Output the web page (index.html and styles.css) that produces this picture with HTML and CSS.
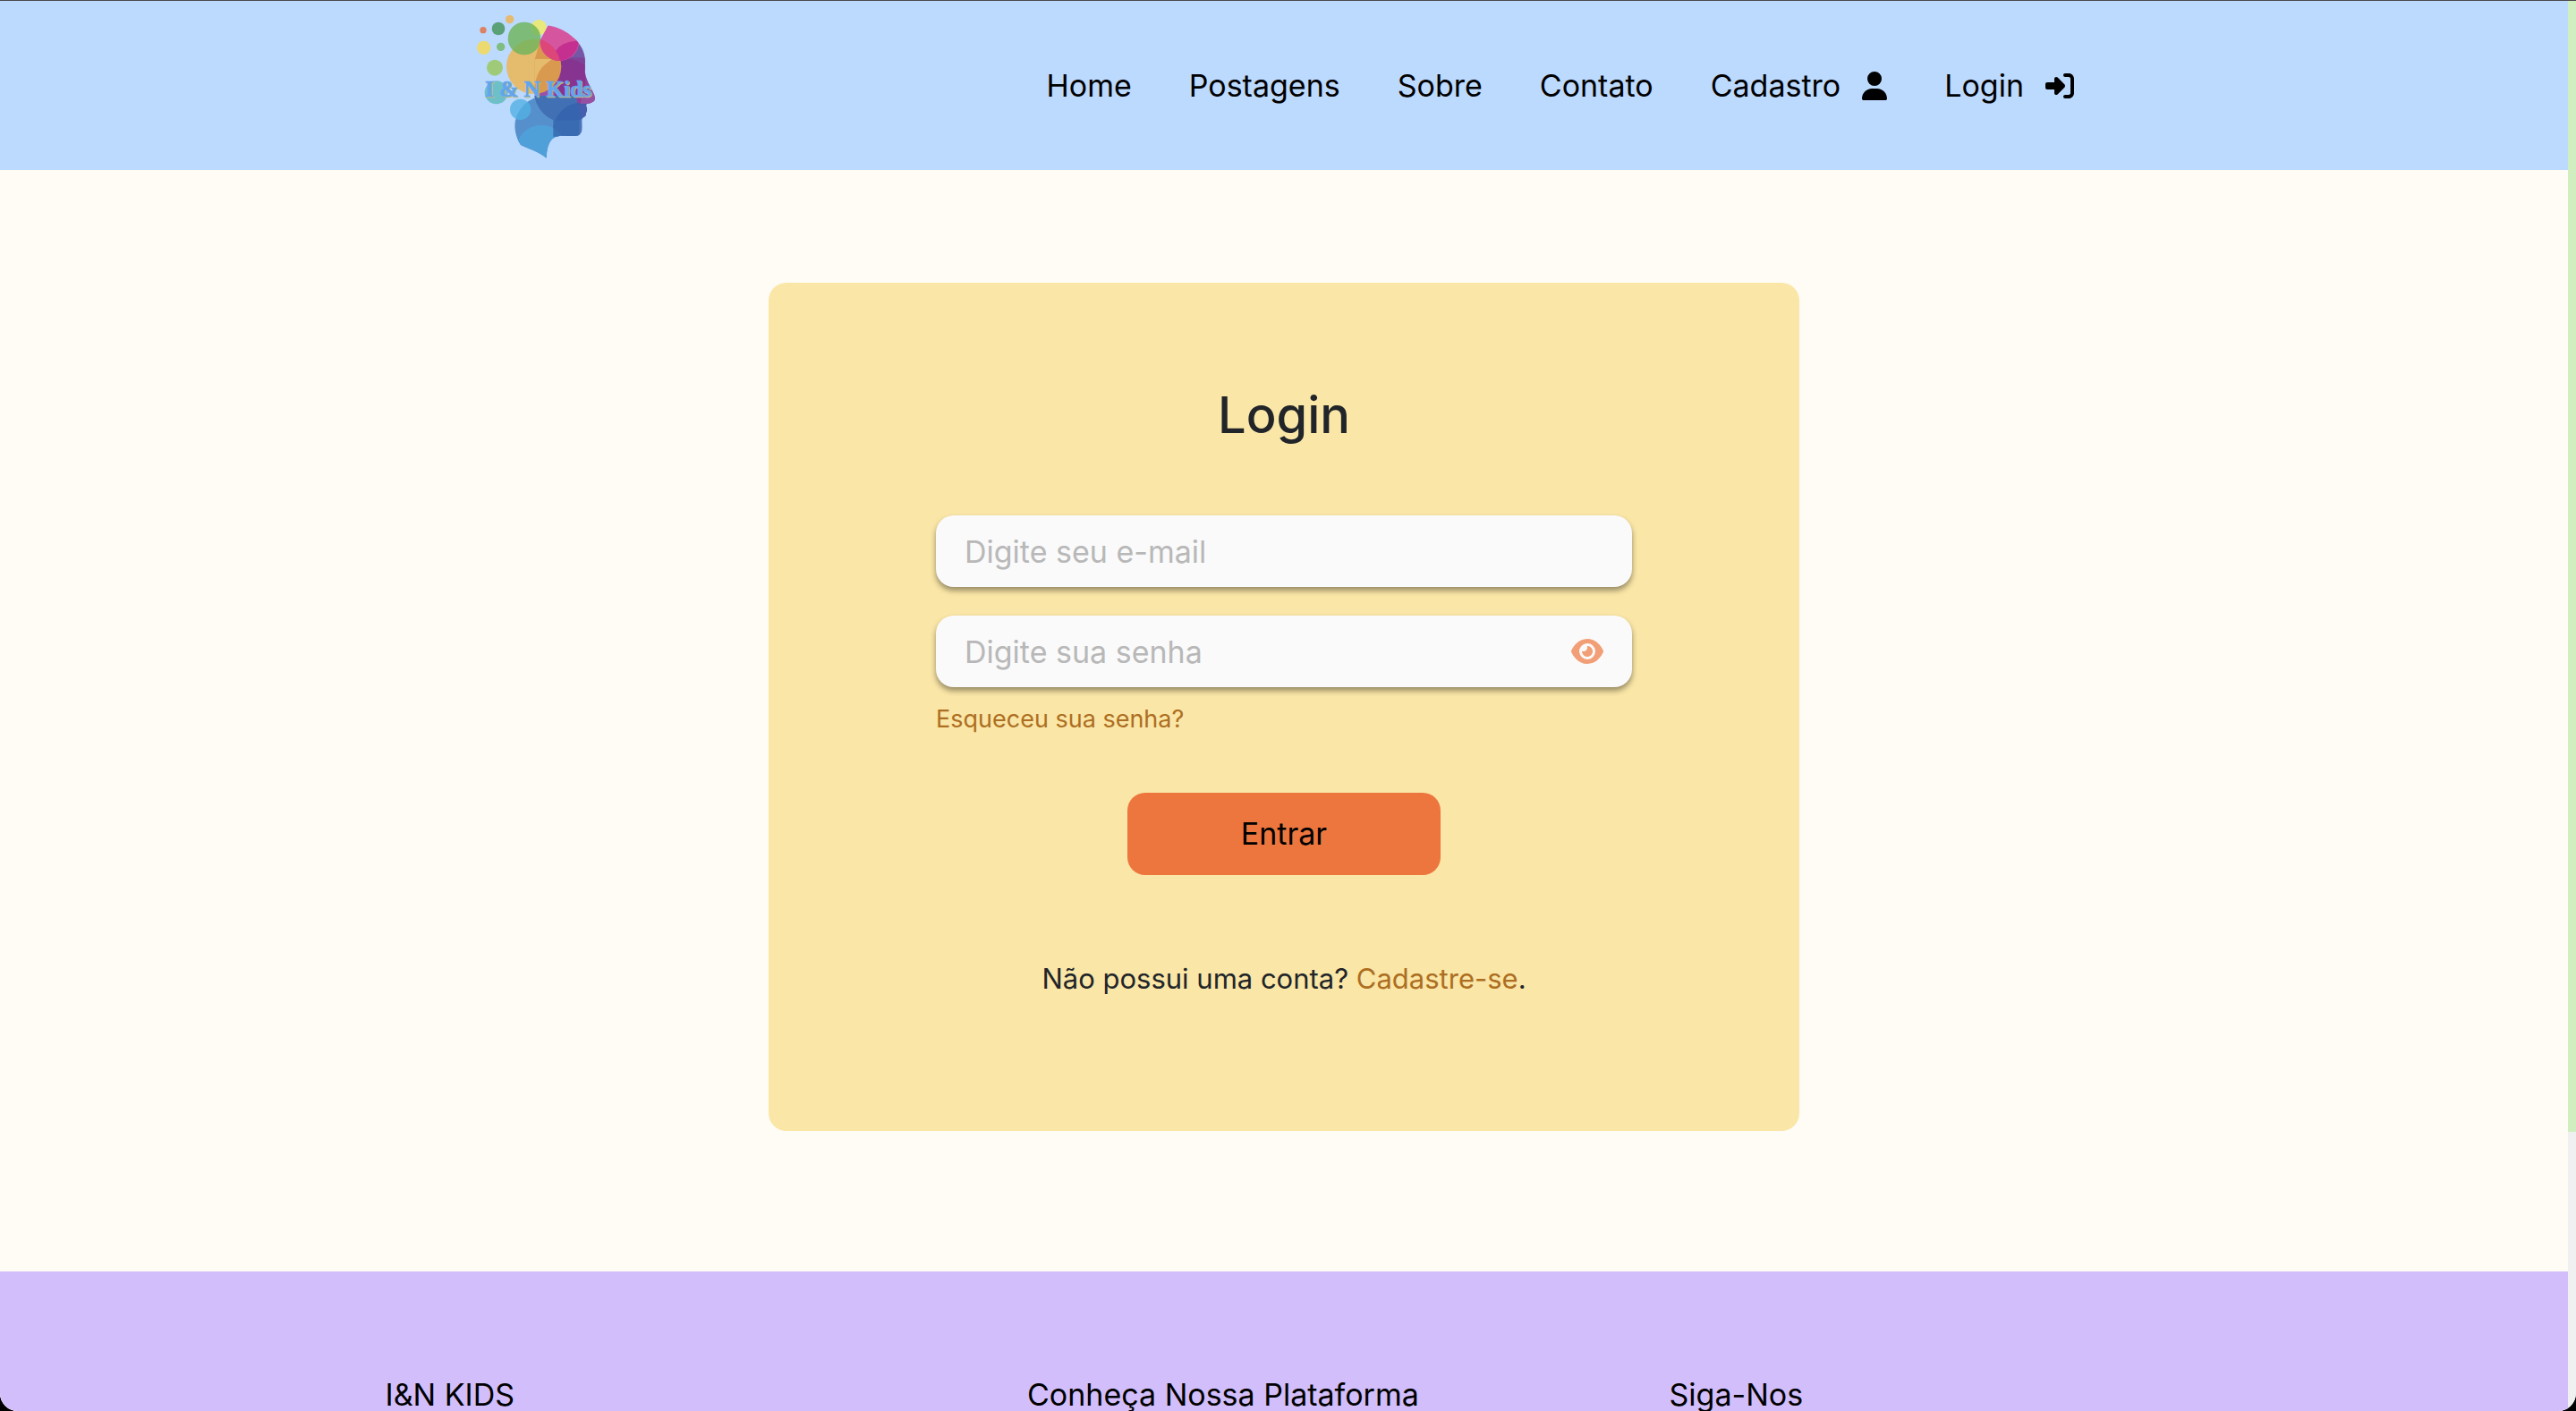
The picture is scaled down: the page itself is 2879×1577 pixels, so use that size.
FILE: index.html
```html
<!DOCTYPE html>
<html lang="pt-BR">
<head>
  <meta charset="utf-8">
  <meta name="viewport" content="width=device-width, initial-scale=1">
  <title>I&amp;N Kids - Login</title>
  <link rel="stylesheet" href="styles.css">
</head>
<body>
  <div class="window">
    <div class="page">
      <header class="header">
        <div class="header-inner">
          <a class="logo" href="#" aria-label="I &amp; N Kids">
            <svg class="logo-art" viewBox="60 0 420 567">
              <defs>
                <clipPath id="head">
                  <path d="M308 82C372 94 431 142 432 200L431 238C436 275 460 300 465 325C466 340 450 343 437 345C432 352 440 358 438 365C439 372 432 376 435 382C434 390 422 390 421 400C421 425 425 442 410 451C390 458 350 445 328 458C308 470 303 500 302 527C275 505 240 495 216 483C190 445 192 390 205 365C220 335 245 322 262 317L262 200L282 130Z"/>
                </clipPath>
              </defs>
              <circle cx="90" cy="98" r="11" fill="#dc8262"/>
              <circle cx="141" cy="93" r="22" fill="#5ba177"/>
              <circle cx="179" cy="62" r="14" fill="#e6ba70"/>
              <circle cx="92" cy="157" r="23" fill="#ecda70"/>
              <circle cx="149" cy="154" r="14" fill="#80bd80"/>
              <circle cx="129" cy="224" r="27" fill="#9fcb79"/>
              <circle cx="134" cy="307" r="39" fill="#6dbfc8"/>
              <circle cx="277" cy="89" r="26" fill="#e8e87c"/>
              <circle cx="260" cy="220" r="92" fill="#e5bb6d"/>
              <circle cx="228" cy="126" r="55" fill="#6fb55c" fill-opacity=".82"/>
              <g clip-path="url(#head)">
                <path d="M432 400V130H390C340 145 318 180 320 215L330 240V320H432Z" fill="#7558a5"/>
                <circle cx="368" cy="301" r="107" fill="#8f2f8f" fill-opacity=".8"/>
                <path d="M350 190H480V350H350Z" fill="#85338f" fill-opacity=".55"/>
                <circle cx="260" cy="220" r="92" fill="#d99a4f"/>
                <path d="M262 195H320L305 208C275 228 262 260 262 317L200 320V195Z" fill="#e5bb6d"/>
                <circle cx="303" cy="425" r="108" fill="#5690cc"/>
                <path d="M262 318A107 107 0 0 0 420 395L400 318Z" fill="#4170b4"/>
                <circle cx="420" cy="437" r="96" fill="#3561ae" fill-opacity=".85"/>
                <circle cx="285" cy="500" r="84" fill="#4f9fd8"/>
                <path d="M325 455V400H412V455Z" fill="#386cb1" fill-opacity=".9"/>
                <path d="M430 300H480V345H415Z" fill="#9a55a5" fill-opacity=".8"/>
                <circle cx="346" cy="135" r="66" fill="#d6559f"/>
                <path d="M330 199C320 165 355 134 410 134A66 66 0 0 1 330 199Z" fill="#c53090"/>
                <path d="M281 129A92 92 0 0 1 347 201A66 66 0 0 1 281 129Z" fill="#dc4679"/>
              </g>
              <circle cx="215" cy="364" r="35" fill="#53b0e3" fill-opacity=".8"/>
              <text class="logo-shadow" x="99" y="324">I &amp; N Kids</text>
              <text class="logo-text" x="96" y="321">I &amp; N Kids</text>
            </svg>
          </a>
          <nav class="nav" aria-label="Principal">
            <a href="#">Home</a>
            <a href="#">Postagens</a>
            <a href="#">Sobre</a>
            <a href="#">Contato</a>
            <a href="#">Cadastro
              <svg class="icon-user" viewBox="0 0 448 512" aria-hidden="true"><path d="M224 256A128 128 0 1 0 224 0a128 128 0 1 0 0 256zm-45.7 48C79.8 304 0 383.8 0 482.3C0 498.7 13.3 512 29.7 512H418.3c16.4 0 29.7-13.3 29.7-29.7C448 383.8 368.2 304 269.7 304H178.3z"/></svg>
            </a>
            <a href="#">Login
              <svg class="icon-login" viewBox="0 0 512 512" aria-hidden="true"><path d="M217.9 105.9L340.7 228.7c7.2 7.2 11.3 17.1 11.3 27.3s-4.1 20.1-11.3 27.3L217.9 406.1c-6.4 6.4-15 9.9-24 9.9c-18.7 0-33.9-15.2-33.9-33.9l0-62.1L32 320c-17.7 0-32-14.3-32-32l0-64c0-17.7 14.3-32 32-32l128 0 0-62.1c0-18.7 15.2-33.9 33.9-33.9c9 0 17.6 3.6 24 9.9zM352 416l64 0c17.7 0 32-14.3 32-32l0-256c0-17.7-14.3-32-32-32l-64 0c-17.7 0-32-14.3-32-32s14.3-32 32-32l64 0c53 0 96 43 96 96l0 256c0 53-43 96-96 96l-64 0c-17.7 0-32-14.3-32-32s14.3-32 32-32z"/></svg>
            </a>
          </nav>
        </div>
      </header>

      <main class="main">
        <form class="card">
          <h1 class="title">Login</h1>
          <div class="fields">
            <input class="field" type="email" placeholder="Digite seu e-mail" aria-label="E-mail">
            <div class="password">
              <input class="field" type="password" placeholder="Digite sua senha" aria-label="Senha">
              <button class="reveal" type="button" aria-label="Mostrar senha">
                <svg class="icon-eye" viewBox="0 0 576 512" aria-hidden="true"><path d="M288 32c-80.8 0-145.5 36.8-192.6 80.6C48.6 156 17.3 208 2.5 243.7c-3.3 7.9-3.3 16.7 0 24.6C17.3 304 48.6 356 95.4 399.4C142.5 443.2 207.2 480 288 480s145.5-36.8 192.6-80.6c46.8-43.5 78.1-95.4 93-131.1c3.3-7.9 3.3-16.7 0-24.6c-14.9-35.7-46.2-87.7-93-131.1C433.5 68.8 368.8 32 288 32zM144 256a144 144 0 1 1 288 0 144 144 0 1 1 -288 0zm144-64c0 35.3-28.7 64-64 64c-7.1 0-13.9-1.2-20.3-3.3c-5.5-1.8-11.9 1.6-11.7 7.4c.3 6.9 1.3 13.8 3.2 20.7c13.7 51.2 66.4 81.6 117.6 67.9s81.6-66.4 67.9-117.6c-11.1-41.5-47.8-69.4-88.6-71.1c-5.8-.2-9.2 6.1-7.4 11.7c2.1 6.4 3.3 13.2 3.3 20.3z"/></svg>
              </button>
            </div>
          </div>
          <a class="forgot" href="#">Esqueceu sua senha?</a>
          <button class="submit" type="submit">Entrar</button>
          <p class="signup">Não possui uma conta? <a href="#">Cadastre-se</a>.</p>
        </form>
      </main>

      <footer class="footer">
        <h2>I&amp;N KIDS</h2>
        <h2>Conheça Nossa Plataforma</h2>
        <h2>Siga-Nos</h2>
      </footer>
    </div>
    <div class="scrollbar" aria-hidden="true"><div class="thumb"></div></div>
  </div>
</body>
</html>
```
FILE: styles.css
```css
* {
  box-sizing: border-box;
}

body {
  margin: 0;
  background: #000;
  color: #212529;
  font-family: Inter, "Open Sans", sans-serif;
  font-size: 34px;
  line-height: 48px;
}

a {
  color: #ad6e22;
  text-decoration: none;
}

button,
input {
  border: 0;
  font: inherit;
}

.window {
  display: flex;
  height: 100vh;
  overflow: hidden;
  border-top: 1px solid #4a4a4c;
  border-radius: 0 0 20px 20px;
  background: #f0f0f0;
}

.page {
  flex: 1;
  min-width: 0;
  overflow: hidden;
  background: #fffcf5;
}

.scrollbar {
  width: 9px;
  background: #f0f0f0;
}

.thumb {
  height: 80.2%;
  background: #d0eebf;
}

.header {
  background: #bcd9fe;
}

.header-inner {
  display: flex;
  align-items: center;
  justify-content: space-between;
  max-width: 1810px;
  margin: 0 auto;
  padding-right: 22px;
}

.logo-art {
  display: block;
  width: 140px;
  height: 189px;
}

.logo-text,
.logo-shadow {
  font-family: "Liberation Serif", serif;
  font-size: 76px;
  font-weight: 700;
  fill: #62a5ee;
  stroke: #62a5ee;
  stroke-width: 2px;
}

.logo-shadow {
  fill: #c3bd7c;
  stroke: #c3bd7c;
}

.nav {
  display: flex;
  gap: 64px;
}

.nav a {
  display: flex;
  align-items: center;
  gap: 24px;
  color: #000;
}

.icon-user {
  width: 28px;
  height: 32px;
}

.icon-login {
  width: 32px;
  height: 32px;
}

.main {
  padding: 126px 32px 157px;
}

.card {
  display: flex;
  flex-direction: column;
  align-items: center;
  max-width: 1152px;
  margin: 0 auto;
  padding: 112px 187px 146px;
  border-radius: 20px;
  background: #fae6a6;
}

.title {
  margin: 0 0 76px;
  font-size: 56px;
  font-weight: 500;
  line-height: 72px;
}

.fields {
  display: grid;
  gap: 32px;
  width: 100%;
}

.field {
  width: 100%;
  height: 80px;
  padding: 0 32px;
  border-radius: 20px;
  background: #fafafa;
  box-shadow: 0 4px 6px rgba(0, 0, 0, .4);
}

.field::placeholder {
  color: #b8b8b8;
  opacity: 1;
}

.password {
  position: relative;
}

.reveal {
  position: absolute;
  inset: 0 32px 0 auto;
  padding: 0;
  background: none;
}

.icon-eye {
  display: block;
  width: 36px;
  height: 32px;
  fill: #f29e76;
}

.forgot {
  align-self: flex-start;
  margin: 16px 0 62px;
  font-size: 27px;
  line-height: 40px;
}

.submit {
  width: 350px;
  height: 92px;
  border-radius: 20px;
  background: #ed763e;
  color: #000;
}

.signup {
  margin: 92px 0 0;
  font-size: 31px;
}

.footer {
  display: grid;
  grid-template-columns: repeat(3, 1fr);
  padding: 114px 10% 114px 15%;
  background: #d2befb;
}

.footer h2 {
  margin: 0;
  color: #000;
  font-size: 34px;
  font-weight: 400;
}
```
